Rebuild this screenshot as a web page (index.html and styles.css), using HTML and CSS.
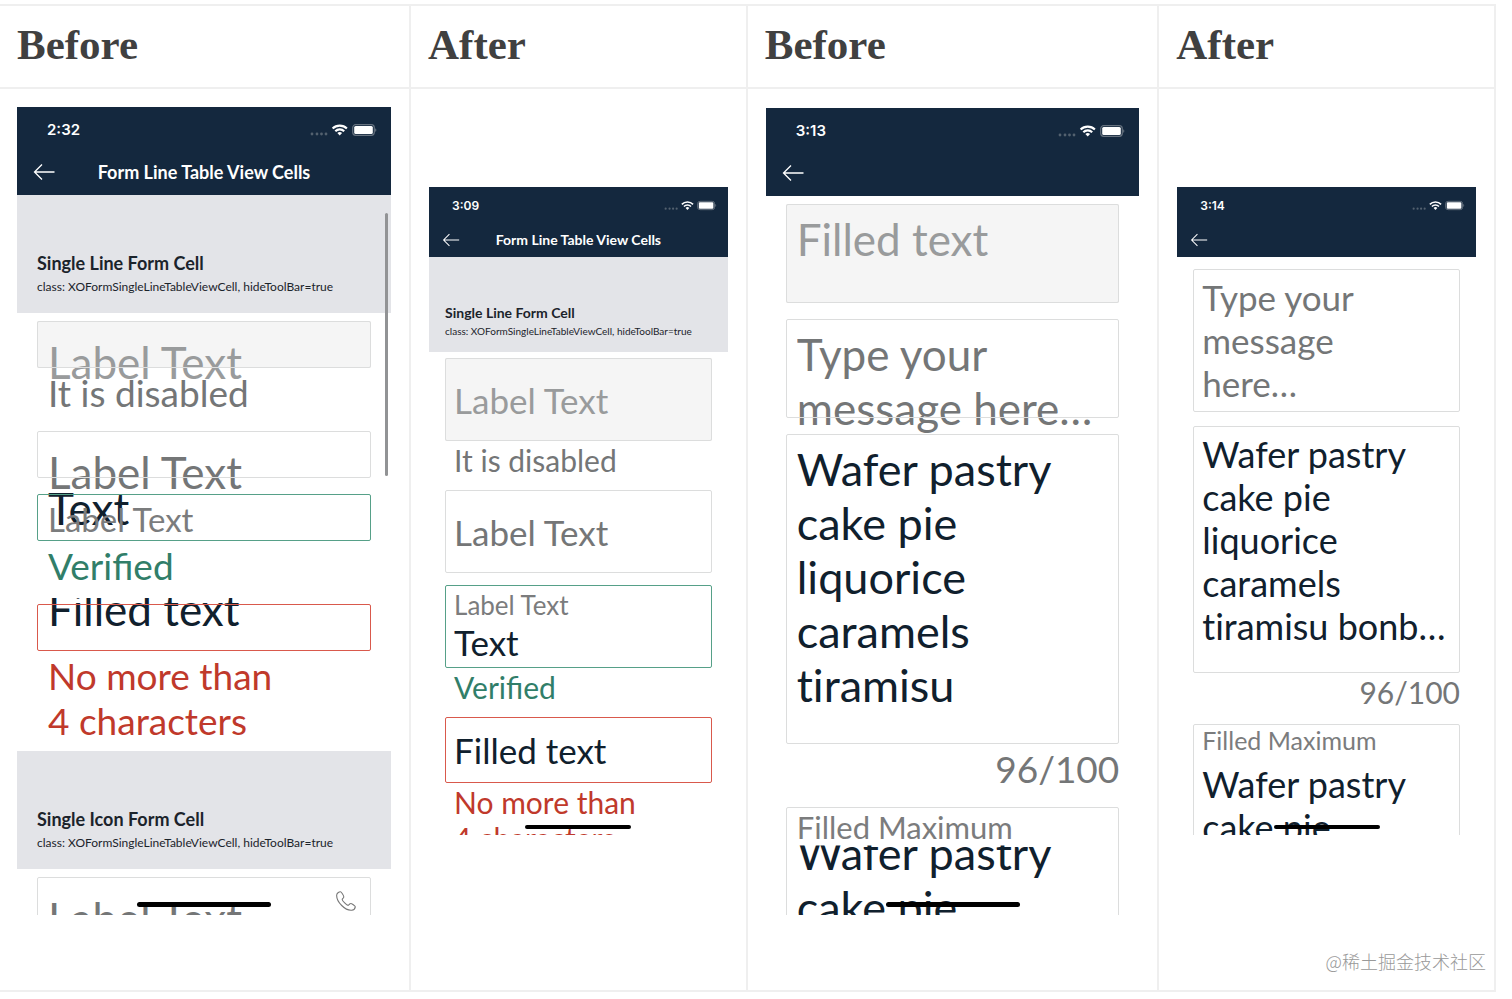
FILE: index.html
```
<!DOCTYPE html>
<html lang="en">
<head>
    <meta charset="UTF-8">
    <meta name="viewport" content="width=device-width, initial-scale=1.0">
    <title>Form cells: before and after</title>
    <link rel="stylesheet" href="styles.css">
</head>
<body>
    <!-- Shared icons -->
    <svg class="icons" aria-hidden="true">
        <symbol id="status-icons" viewBox="0 0 68 14">
            <g fill="#53616f">
                <circle cx="3" cy="11" r="1.4"/>
                <circle cx="8" cy="11" r="1.4"/>
                <circle cx="12.500" cy="11" r="1.4"/>
                <circle cx="17" cy="11" r="1.4"/>
            </g>
            <g fill="none" stroke="#fff" stroke-width="2.100">
                <path d="M23.600 5.600a10 10 0 0 1 14.300 0"/>
                <path d="M26.300 8.300a6.200 6.200 0 0 1 8.900 0"/>
            </g>
            <path fill="#fff" d="M28.400 10.100a3.400 3.400 0 0 1 4.700 0l-2.350 2.500z"/>
            <rect x="43.700" y="1.700" width="21.600" height="10.600" rx="3" fill="none" stroke="#66727f" stroke-width="1.200"/>
            <rect x="45.200" y="3" width="18.600" height="8" rx="1.500" fill="#fff"/>
            <path fill="#66727f" d="M66.200 5.200c1.500.4 1.500 3.200 0 3.600z"/>
        </symbol>
        <symbol id="back-arrow" viewBox="0 0 22 18">
            <path d="M9 1.500 1.500 9 9 16.500M1.500 9h20" fill="none" stroke="#fff" stroke-width="1.300"/>
        </symbol>
        <symbol id="handset" viewBox="0 0 20 20">
            <path d="M4.600.8C3.500.6.900 1.800.700 4c-.3 3.600 2.200 7.700 5 10.500 2.800 2.800 6.500 5 10 4.700 1.800-.2 3.400-2 3.600-3.400.1-.7-3.900-3.500-4.700-3.300-.9.200-1.700 1.900-2.500 1.900-1.300 0-5.900-4.600-5.900-5.900C6.200 7.700 7.700 7 7.800 6 7.900 5 5.400.900 4.600.8z" fill="none" stroke="#777" stroke-width="1.100"/>
        </symbol>
    </svg>

    <div class="comparison">
        <table>
            <colgroup>
                <col class="col-before">
                <col class="col-after">
                <col class="col-before">
                <col class="col-after">
            </colgroup>
            <thead>
                <tr>
                    <th>Before</th>
                    <th>After</th>
                    <th>Before</th>
                    <th>After</th>
                </tr>
            </thead>
            <tbody>
                <tr>
                    <td>
                        <div class="phone">
                            <div class="navbar">
                                <div class="status"><span>2:32</span><svg><use href="#status-icons"/></svg></div>
                                <div class="nav">
                                    <button type="button" aria-label="Back"><svg><use href="#back-arrow"/></svg></button>
                                    <span class="title">Form Line Table View Cells</span>
                                </div>
                            </div>
                            <div class="section">
                                <h2>Single Line Form Cell</h2>
                                <p>class: XOFormSingleLineTableViewCell, hideToolBar=true</p>
                            </div>
                            <div class="cell">
                                <div class="box disabled"><input type="text" aria-label="Disabled field" placeholder="Label Text" disabled></div>
                                <p class="help">It is disabled</p>
                            </div>
                            <div class="cell">
                                <div class="box"><input type="text" aria-label="Empty field" placeholder="Label Text"></div>
                            </div>
                            <div class="cell">
                                <div class="box valid overlap">
                                    <input type="text" id="before-text" value="Text">
                                    <label for="before-text">Label Text</label>
                                </div>
                                <p class="help valid">Verified</p>
                            </div>
                            <div class="cell">
                                <div class="box invalid cut"><input type="text" aria-label="Filled field" value="Filled text"></div>
                                <p class="help invalid">No more than<br>4 characters</p>
                            </div>
                            <div class="section">
                                <h2>Single Icon Form Cell</h2>
                                <p>class: XOFormSingleLineTableViewCell, hideToolBar=true</p>
                            </div>
                            <div class="cell">
                                <div class="box">
                                    <input type="text" aria-label="Phone" placeholder="Label Text">
                                    <svg class="handset"><use href="#handset"/></svg>
                                </div>
                            </div>
                            <div class="scrollbar"></div>
                            <div class="home-bar"></div>
                        </div>
                    </td>
                    <td>
                        <div class="phone small">
                            <div class="navbar">
                                <div class="status"><span>3:09</span><svg><use href="#status-icons"/></svg></div>
                                <div class="nav">
                                    <button type="button" aria-label="Back"><svg><use href="#back-arrow"/></svg></button>
                                    <span class="title">Form Line Table View Cells</span>
                                </div>
                            </div>
                            <div class="section">
                                <h2>Single Line Form Cell</h2>
                                <p>class: XOFormSingleLineTableViewCell, hideToolBar=true</p>
                            </div>
                            <div class="cell">
                                <div class="box disabled"><input type="text" aria-label="Disabled field" placeholder="Label Text" disabled></div>
                                <p class="help">It is disabled</p>
                            </div>
                            <div class="cell">
                                <div class="box"><input type="text" aria-label="Empty field" placeholder="Label Text"></div>
                            </div>
                            <div class="cell">
                                <div class="box valid labelled">
                                    <label for="after-text">Label Text</label>
                                    <input type="text" id="after-text" value="Text">
                                </div>
                                <p class="help valid">Verified</p>
                            </div>
                            <div class="cell">
                                <div class="box invalid short"><input type="text" aria-label="Filled field" value="Filled text"></div>
                                <p class="help invalid">No more than<br>4 characters</p>
                            </div>
                            <div class="home-bar"></div>
                        </div>
                    </td>
                    <td>
                        <div class="phone areas">
                            <div class="navbar">
                                <div class="status"><span>3:13</span><svg><use href="#status-icons"/></svg></div>
                                <div class="nav">
                                    <button type="button" aria-label="Back"><svg><use href="#back-arrow"/></svg></button>
                                </div>
                            </div>
                            <div class="cell">
                                <div class="box disabled"><textarea rows="1" aria-label="Disabled message" disabled>Filled text</textarea></div>
                            </div>
                            <div class="cell">
                                <div class="box"><textarea rows="2" aria-label="Message" placeholder="Type your&#10;message here…"></textarea></div>
                            </div>
                            <div class="cell">
                                <div class="box tall"><textarea rows="5" aria-label="Filled message">Wafer pastry
cake pie
liquorice
caramels
tiramisu</textarea></div>
                                <p class="help count">96/100</p>
                            </div>
                            <div class="cell">
                                <div class="box tall overlap">
                                    <textarea rows="2" id="before-max">Wafer pastry
cake pie</textarea>
                                    <label for="before-max">Filled Maximum</label>
                                </div>
                            </div>
                            <div class="home-bar"></div>
                        </div>
                    </td>
                    <td>
                        <div class="phone small areas">
                            <div class="navbar">
                                <div class="status"><span>3:14</span><svg><use href="#status-icons"/></svg></div>
                                <div class="nav">
                                    <button type="button" aria-label="Back"><svg><use href="#back-arrow"/></svg></button>
                                </div>
                            </div>
                            <div class="cell">
                                <div class="box"><textarea rows="3" aria-label="Message" placeholder="Type your&#10;message&#10;here…"></textarea></div>
                            </div>
                            <div class="cell">
                                <div class="box tall"><textarea rows="5" aria-label="Filled message">Wafer pastry
cake pie
liquorice
caramels
tiramisu bonb…</textarea></div>
                                <p class="help count">96/100</p>
                            </div>
                            <div class="cell">
                                <div class="box tall labelled">
                                    <label for="after-max">Filled Maximum</label>
                                    <textarea rows="2" id="after-max">Wafer pastry
cake pie</textarea>
                                </div>
                            </div>
                            <div class="home-bar"></div>
                        </div>
                    </td>
                </tr>
            </tbody>
        </table>
        <div class="watermark" lang="zh-CN">@稀土掘金技术社区</div>
    </div>
</body>
</html>
```
FILE: styles.css
```
* {
    box-sizing: border-box;
}
body {
    margin: 4px 16px 0 0;
    background: #fff;
    font-family: Lato, "Liberation Sans", sans-serif;
}
.icons {
    display: none;
}
.comparison {
    position: relative;
}
table {
    width: 100%;
    table-layout: fixed;
    border-collapse: collapse;
}
.col-before {
    width: 27.5%;
}
.col-after {
    width: 22.5%;
}
.col-before:first-child {
    width: 27.4%;
}
th, td {
    border: 2px solid #efefef;
    text-align: left;
}
th {
    padding: 14px 17px 17px;
    color: #404040;
    font: bold 43px/50px "Liberation Serif", serif;
}
td {
    padding: 18px 18px 75px;
    vertical-align: middle;
}
th:first-child, td:first-child {
    padding-left: 17px;
    border-left: 0;
}

/* Phone */
.phone {
    position: relative;
    aspect-ratio: 374 / 808;
    overflow: hidden;
    background: #fff;
}
.navbar {
    padding-bottom: 4px;
    background: #14283e;
    color: #fff;
}
.status {
    display: flex;
    align-items: center;
    justify-content: space-between;
    height: 46px;
    padding: 0 14px 0 30px;
    font: 600 15px/20px Inter, sans-serif;
}
.status svg {
    width: 68px;
    height: 14px;
}
.nav {
    display: grid;
    grid-template-columns: 1fr auto 1fr;
    align-items: center;
    height: 38px;
    padding: 0 16px;
}
.nav button {
    justify-self: start;
    display: flex;
    padding: 0;
    border: 0;
    background: none;
    cursor: pointer;
}
.nav svg {
    width: 22px;
    height: 18px;
}
.title {
    font-size: 18px;
    font-weight: bold;
}
.section {
    height: 118px;
    padding: 56px 20px 0;
    background: #e3e4e8;
    color: #1b232b;
}
.section h2 {
    margin: 0 0 2px;
    font-size: 18px;
    line-height: 24px;
}
.section p {
    margin: 0;
    font-size: 12px;
    line-height: 20px;
    white-space: nowrap;
}

/* Form cells */
.cell {
    padding: 8px 20px;
}
.box {
    position: relative;
    height: 47px;
    padding: 14px 11px 0;
}
/* the outline is drawn above the text */
.box::after {
    content: "";
    position: absolute;
    inset: 0;
    border: 1px solid #dcdddd;
    border-radius: 2px;
    pointer-events: none;
}
.box.disabled {
    background: #f5f5f5;
}
.box.valid::after {
    border-color: #56a088;
}
.box.invalid::after {
    border-color: #d9594c;
}
input, textarea {
    display: block;
    width: 100%;
    height: 54px;
    margin: 0;
    padding: 0;
    border: 0;
    outline: 0;
    background: none;
    color: #10202d;
    font: 44px/54px Lato, sans-serif;
    resize: none;
    overflow: hidden;
}
textarea {
    height: auto;
    font-variant-ligatures: none;
}
.tall textarea {
    font-size: 45px;
}
::placeholder {
    color: #747677;
    opacity: 1;
}
:disabled, :disabled::placeholder {
    color: #999b9c;
}
label {
    display: block;
    color: #7b7c7d;
    font-size: 33px;
    line-height: 40px;
}
.help {
    margin: 2px 0 0;
    padding: 0 11px;
    color: #747677;
    font-size: 37px;
    line-height: 45px;
}
.help.valid {
    color: #317e69;
}
.help.invalid {
    color: #c0392b;
}
.help.count {
    padding: 0;
    text-align: right;
}
.overlap label {
    position: absolute;
    top: 5px;
    left: 11px;
}
.overlap input {
    margin-top: -27px;
}
.cut input {
    margin-top: -36px;
    clip-path: inset(16px 0 0);
}
.handset {
    position: absolute;
    top: 14px;
    right: 15px;
    width: 20px;
    height: 20px;
}
.scrollbar {
    position: absolute;
    top: 106px;
    right: 3px;
    width: 3px;
    height: 263px;
    border-radius: 2px;
    background: #929395;
}
.home-bar {
    position: absolute;
    bottom: 8px;
    left: 50%;
    width: 134px;
    height: 5px;
    margin-left: -67px;
    border-radius: 3px;
    background: #000;
}

/* Text area cells */
.areas .box {
    height: 99px;
    padding-top: 8px;
}
.areas .box.tall {
    height: 310px;
}
.areas .overlap textarea {
    margin-top: 11px;
    clip-path: inset(20px 0 0);
}
.areas label {
    font-size: 31px;
}
.areas .overlap label {
    top: 0;
}

/* Smaller phone */
.small {
    aspect-ratio: 298 / 646;
}
.small .navbar {
    padding-bottom: 2px;
}
.small .status {
    height: 37px;
    padding: 0 11px 0 23px;
    font-size: 12px;
}
.small .status svg {
    width: 54px;
    height: 11px;
}
.small .nav {
    height: 31px;
    padding: 0 13px;
}
.small .nav svg {
    width: 18px;
    height: 14px;
}
.small .title {
    font-size: 14px;
}
.small .section {
    height: 95px;
    padding: 46px 16px 0;
}
.small h2 {
    margin-bottom: 1px;
    font-size: 14px;
    line-height: 19px;
}
.small .section p {
    font-size: 10px;
    line-height: 16px;
}
.small .cell {
    padding: 6px 16px;
}
.small .box {
    height: 83px;
    padding: 21px 9px 0;
}
.small .box.short {
    height: 66px;
    padding-top: 12px;
}
.small .box.labelled {
    padding-top: 4px;
}
.small input, .small textarea {
    font-size: 35px;
    line-height: 43px;
}
.small .tall textarea {
    font-size: 36px;
}
.small input {
    height: 43px;
}
.small label {
    font-size: 26px;
    line-height: 32px;
}
.small .help {
    margin: 1px 0 0;
    padding: 0 9px;
    font-size: 30px;
    line-height: 36px;
}
.small .help.count {
    padding: 0;
}
.small .home-bar {
    bottom: 6px;
    width: 106px;
    height: 4px;
    margin-left: -53px;
}
.small.areas .navbar {
    margin-bottom: 5px;
}
.small.areas .cell {
    padding: 7px 16px;
}
.small.areas .box {
    height: 143px;
    padding-top: 7px;
}
.small.areas .box.tall {
    height: 247px;
}
.small.areas .box.labelled {
    padding-top: 0;
}
.small.areas label {
    font-size: 25px;
}
.small.areas .labelled textarea {
    margin-top: 7px;
}

.watermark {
    position: absolute;
    right: 10px;
    bottom: 18px;
    color: #999;
    font: 300 18px/26px "Noto Sans CJK SC", sans-serif;
}
```
